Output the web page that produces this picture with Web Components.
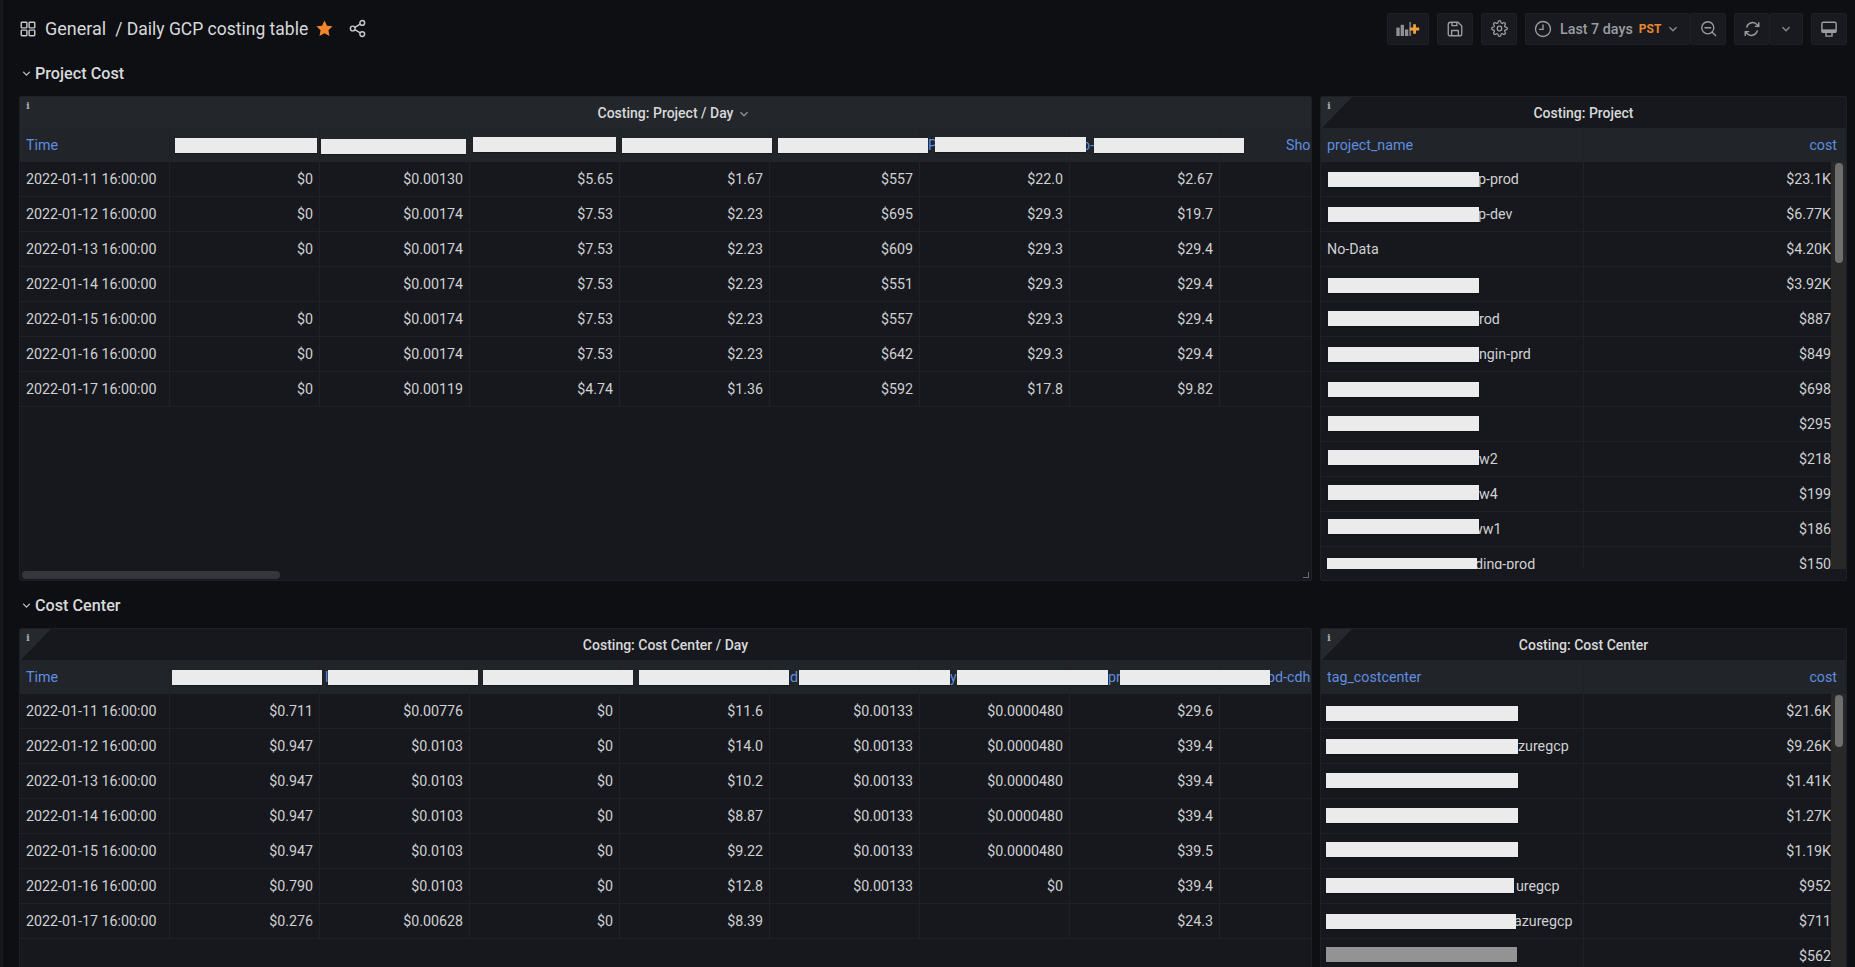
<!DOCTYPE html>
<html><head><meta charset="utf-8"><title>Daily GCP costing table</title>
<style>
html,body{margin:0;padding:0;width:1855px;height:967px;overflow:hidden;background:#0e0f13;color:#d0d1d3;font-family:Roboto,"Liberation Sans",sans-serif;font-size:14px}
</style></head><body>
<gf-dashboard>
  <gf-topbar>
    <span slot="crumb-a">General</span>
    <span slot="crumb-b">/ Daily GCP costing table</span>
  </gf-topbar>
  <gf-section label="Project Cost"></gf-section>
  <gf-panel-row>
    <gf-panel heading="Costing: Project / Day" active><cost-table key="projectDay"></cost-table></gf-panel>
    <gf-panel heading="Costing: Project" ribbon><cost-table key="project"></cost-table></gf-panel>
  </gf-panel-row>
  <gf-section label="Cost Center" second></gf-section>
  <gf-panel-row>
    <gf-panel heading="Costing: Cost Center / Day" ribbon><cost-table key="centerDay"></cost-table></gf-panel>
    <gf-panel heading="Costing: Cost Center" ribbon><cost-table key="center"></cost-table></gf-panel>
  </gf-panel-row>
</gf-dashboard>
<script>
const ICONS={
 grid:'<g fill="none" stroke="currentColor" stroke-width="1.9"><rect x="3" y="3" width="7.5" height="7.5" rx="1"/><rect x="13.5" y="3" width="7.5" height="7.5" rx="1"/><rect x="3" y="13.5" width="7.5" height="7.5" rx="1"/><rect x="13.5" y="13.5" width="7.5" height="7.5" rx="1"/></g>',
 star:'<path fill="#f0852c" d="M12 1.8l3.1 6.6 7.1.9-5.2 5 1.3 7.1L12 18l-6.3 3.4L7 14.3l-5.2-5 7.1-.9z"/>',
 share:'<g fill="none" stroke="currentColor" stroke-width="1.8"><circle cx="18" cy="5" r="3"/><circle cx="6" cy="12" r="3"/><circle cx="18" cy="19" r="3"/><path d="M8.6 10.5l6.8-4M8.6 13.5l6.8 4"/></g>',
 addpanel:'<g fill="#8e9094"><rect x="0" y="6" width="3.6" height="9"/><rect x="4.6" y="3" width="3.6" height="12"/><rect x="9.2" y="8" width="3.6" height="7"/><rect x="13.8" y="0" width="2" height="15" opacity=".75"/></g><path fill="#f2a33c" d="M18 2.5h3v3.5h3.5v3H21v3.5h-3V9h-3.5V6H18z"/>',
 save:'<path fill="none" stroke="currentColor" stroke-width="1.8" stroke-linejoin="round" d="M6 3h10l5 5v11a2 2 0 0 1-2 2H5a2 2 0 0 1-2-2V6a3 3 0 0 1 3-3zM7.5 21v-7h9v7M8 3v4.5h6.5V3"/>',
 cog:'<g fill="none" stroke="currentColor" stroke-width="1.8" stroke-linejoin="round"><circle cx="12" cy="12" r="3.2"/><path d="M19.4 15a1.65 1.65 0 0 0 .33 1.82l.06.06a2 2 0 0 1 0 2.83 2 2 0 0 1-2.83 0l-.06-.06a1.65 1.65 0 0 0-1.82-.33 1.65 1.65 0 0 0-1 1.51V21a2 2 0 0 1-2 2 2 2 0 0 1-2-2v-.09A1.65 1.65 0 0 0 9 19.4a1.65 1.65 0 0 0-1.82.33l-.06.06a2 2 0 0 1-2.83 0 2 2 0 0 1 0-2.83l.06-.06a1.65 1.65 0 0 0 .33-1.82 1.65 1.65 0 0 0-1.51-1H3a2 2 0 0 1-2-2 2 2 0 0 1 2-2h.09A1.65 1.65 0 0 0 4.6 9a1.65 1.65 0 0 0-.33-1.82l-.06-.06a2 2 0 0 1 0-2.83 2 2 0 0 1 2.83 0l.06.06a1.65 1.65 0 0 0 1.82.33H9a1.65 1.65 0 0 0 1-1.51V3a2 2 0 0 1 2-2 2 2 0 0 1 2 2v.09a1.65 1.65 0 0 0 1 1.51 1.65 1.65 0 0 0 1.82-.33l.06-.06a2 2 0 0 1 2.83 0 2 2 0 0 1 0 2.83l-.06.06a1.65 1.65 0 0 0-.33 1.82V9a1.65 1.65 0 0 0 1.51 1H21a2 2 0 0 1 2 2 2 2 0 0 1-2 2h-.09a1.65 1.65 0 0 0-1.51 1z"/></g>',
 clock:'<g fill="none" stroke="currentColor" stroke-width="1.8" stroke-linecap="round"><circle cx="12" cy="12" r="10"/><path d="M12 6.5V12.5H7.5"/></g>',
 zoomout:'<g fill="none" stroke="currentColor" stroke-width="1.9" stroke-linecap="round"><circle cx="11" cy="11" r="8.5"/><path d="M7 11h8M17.2 17.2L22 22"/></g>',
 sync:'<g fill="none" stroke="currentColor" stroke-width="1.9" stroke-linecap="round" stroke-linejoin="round"><path d="M5 9.5A8 8 0 0 1 19 6.5L21 8.5M21 3.5v5h-4.5"/><path d="M19 14.5A8 8 0 0 1 5 17.5L3 15.5M3 20.5v-5h4.5"/></g>',
 monitor:'<g fill="none" stroke="currentColor" stroke-width="1.9" stroke-linejoin="round"><rect x="2.5" y="3" width="19" height="13.5" rx="2"/><path d="M8 21.5h8v-5H8z"/></g><rect x="2.5" y="12.5" width="19" height="4" fill="currentColor"/>',
 chev:'<path fill="none" stroke="currentColor" stroke-width="2.4" stroke-linecap="round" stroke-linejoin="round" d="M6.5 9.5l5.5 5.5 5.5-5.5"/>'
};
class GfIcon extends HTMLElement{connectedCallback(){
  const n=this.getAttribute('name'),w=this.getAttribute('w')||16,h=this.getAttribute('h')||w;
  const vb=n==='addpanel'?'0 0 25 15':'0 0 24 24';
  this.attachShadow({mode:'open'}).innerHTML=`<style>:host{display:inline-flex;flex:none;width:${w}px;height:${h}px}svg{display:block;width:100%;height:100%}</style><svg viewBox="${vb}">${ICONS[n]}</svg>`;
}}
customElements.define('gf-icon',GfIcon);

class GfDashboard extends HTMLElement{constructor(){super();
  this.attachShadow({mode:'open'}).innerHTML=`<style>:host{display:block;box-sizing:border-box;width:1855px;height:967px;overflow:hidden;border-left:3px solid #16181d;padding:0 8px 0 16px}</style><slot></slot>`;
}}
customElements.define('gf-dashboard',GfDashboard);

class GfBtn extends HTMLElement{constructor(){super();
  this.attachShadow({mode:'open'}).innerHTML=`<style>:host{display:inline-flex;align-items:center;justify-content:center;box-sizing:border-box;height:32px;background:#181a1f;border:1px solid #1e2025;border-radius:2px;color:#9b9da1;font-weight:500;font-size:14px;flex:none}</style><slot></slot>`;
}}
customElements.define('gf-btn',GfBtn);

class GfTopbar extends HTMLElement{constructor(){super();
  this.attachShadow({mode:'open'}).innerHTML=`<style>
  :host{display:flex;align-items:center;height:57px;margin-left:0;color:#d8d9da;font-size:18px}
  .grid{color:#c8c9cc;margin-right:8px}
  .a{margin-right:9px;color:#d8d9da}
  .b{font-size:17.5px}
  .star{margin:0 0 0 7px}
  .share{margin-left:14px;color:#c8c9cc}
  .tools{margin-left:auto;display:flex;gap:8px;align-items:center}
  .g{display:flex}
  .b36{width:36px}.b35{width:35px}.b34{width:34px}
  .time{width:165px;justify-content:flex-start;padding-left:8px;border-right:none}
  .time .lbl{margin-left:8px;font-size:14.3px}
  .time .pst{margin-left:6px;color:#e8872f;font-size:12px;font-weight:700}
  .time gf-icon.c{margin-left:5px}
  .dim{color:#85878c}
  </style>
  <gf-icon class="grid" name="grid" w="18"></gf-icon>
  <span class="a"><slot name="crumb-a"></slot></span>
  <span class="b"><slot name="crumb-b"></slot></span>
  <gf-icon class="star" name="star" w="19"></gf-icon>
  <gf-icon class="share" name="share" w="19"></gf-icon>
  <div class="tools">
    <gf-btn style="width:42px"><gf-icon name="addpanel" w="24" h="14"></gf-icon></gf-btn>
    <gf-btn class="b36"><gf-icon name="save" w="18"></gf-icon></gf-btn>
    <gf-btn class="b36"><gf-icon name="cog" w="17"></gf-icon></gf-btn>
    <div class="g">
      <gf-btn class="time"><gf-icon name="clock" w="18"></gf-icon><span class="lbl">Last 7 days</span><span class="pst">PST</span><gf-icon class="c dim" name="chev" w="14"></gf-icon></gf-btn>
      <gf-btn class="b36"><gf-icon name="zoomout" w="17"></gf-icon></gf-btn>
    </div>
    <div class="g">
      <gf-btn class="b35" style="border-right:none"><gf-icon name="sync" w="18"></gf-icon></gf-btn>
      <gf-btn class="b34"><gf-icon class="dim" name="chev" w="14"></gf-icon></gf-btn>
    </div>
    <gf-btn class="b36"><gf-icon name="monitor" w="18"></gf-icon></gf-btn>
  </div>`;
}}
customElements.define('gf-topbar',GfTopbar);

class GfSection extends HTMLElement{connectedCallback(){
  const s=this.hasAttribute('second');
  this.attachShadow({mode:'open'}).innerHTML=`<style>
  :host{display:flex;align-items:center;height:${s?33:32}px;margin:${s?8:0}px 0 ${s?6:7}px;padding-left:1px;color:#d8d9da;font-size:16.2px;font-weight:500}
  gf-icon{margin-right:2px;color:#c0c1c4}
  </style><gf-icon name="chev" w="13"></gf-icon><span>${this.getAttribute('label')}</span>`;
}}
customElements.define('gf-section',GfSection);

class GfPanelRow extends HTMLElement{constructor(){super();
  this.attachShadow({mode:'open'}).innerHTML=`<style>:host{display:grid;grid-template-columns:1293px 527px;gap:8px;height:485px}</style><slot></slot>`;
}}
customElements.define('gf-panel-row',GfPanelRow);

class GfPanel extends HTMLElement{connectedCallback(){
  const act=this.hasAttribute('active'),rib=this.hasAttribute('ribbon');
  this.attachShadow({mode:'open'}).innerHTML=`<style>
  :host{display:flex;flex-direction:column;position:relative;box-sizing:border-box;background:#16181d;border:1px solid #1e2025;border-radius:2px;overflow:hidden;min-width:0}
  .title{height:31px;flex:none;display:flex;align-items:center;justify-content:center;font-weight:500;font-size:14px;color:#d8d9da;background:${act?'#23262b':'transparent'}}
  .title span{position:relative}
  .title gf-icon{position:absolute;left:100%;top:2px;margin-left:4px;color:#8a8c90}
  .rib{position:absolute;left:0;top:0;width:31px;height:32px;background:#25282d;clip-path:polygon(0 0,100% 0,0 100%)}
  .i{position:absolute;left:6px;top:3px;font:bold 10px "DejaVu Serif",serif;color:#a8aaae}
  .resize{position:absolute;right:2px;bottom:2px;width:6px;height:6px;border-right:1px solid #6a6c70;border-bottom:1px solid #6a6c70;box-sizing:border-box}
  .body{flex:1;min-height:0;position:relative}
  </style>
  ${rib?'<div class="rib"></div>':''}<div class="i">i</div>
  <div class="title"><span>${this.getAttribute('heading')}${act?'<gf-icon name="chev" w="14"></gf-icon>':''}</span></div>
  <div class="body"><slot></slot></div>${act?'<div class="resize"></div>':''}`;
}}
customElements.define('gf-panel',GfPanel);

class RedactBar extends HTMLElement{connectedCallback(){
  const a=k=>this.getAttribute(k);
  this.attachShadow({mode:'open'}).innerHTML=`<style>:host{position:absolute;left:${a('x')}px;top:${a('y')}px;width:${a('w')}px;height:15px;background:${a('c')||'#ebebeb'};box-shadow:0 1px 1px rgba(0,0,0,.25)}</style>`;
}}
customElements.define('redact-bar',RedactBar);

const dayRow=(t,...v)=>[t,...v,''];
const DATA={
 projectDay:{ox:20,oy:128,
  cols:'repeat(9,150px)',
  head:['Time','','','','','',[8,'P'],[12,'o-'],[66,'Sho']],
  rows:[
   dayRow('2022-01-11 16:00:00','$0','$0.00130','$5.65','$1.67','$557','$22.0','$2.67'),
   dayRow('2022-01-12 16:00:00','$0','$0.00174','$7.53','$2.23','$695','$29.3','$19.7'),
   dayRow('2022-01-13 16:00:00','$0','$0.00174','$7.53','$2.23','$609','$29.3','$29.4'),
   dayRow('2022-01-14 16:00:00','','$0.00174','$7.53','$2.23','$551','$29.3','$29.4'),
   dayRow('2022-01-15 16:00:00','$0','$0.00174','$7.53','$2.23','$557','$29.3','$29.4'),
   dayRow('2022-01-16 16:00:00','$0','$0.00174','$7.53','$2.23','$642','$29.3','$29.4'),
   dayRow('2022-01-17 16:00:00','$0','$0.00119','$4.74','$1.36','$592','$17.8','$9.82')],
  bars:[[175,138,142],[321,139,145],[473,137,143],[622,138,150],[778,138,150],[935,137,151],[1094,138,150]],
  hscroll:true},
 centerDay:{ox:20,oy:660,
  cols:'repeat(9,150px)',
  head:['Time','',[5,'l'],'','',[20,'d'],[30,'y'],[38,'pr'],[47,'pd-cdh']],
  rows:[
   dayRow('2022-01-11 16:00:00','$0.711','$0.00776','$0','$11.6','$0.00133','$0.0000480','$29.6'),
   dayRow('2022-01-12 16:00:00','$0.947','$0.0103','$0','$14.0','$0.00133','$0.0000480','$39.4'),
   dayRow('2022-01-13 16:00:00','$0.947','$0.0103','$0','$10.2','$0.00133','$0.0000480','$39.4'),
   dayRow('2022-01-14 16:00:00','$0.947','$0.0103','$0','$8.87','$0.00133','$0.0000480','$39.4'),
   dayRow('2022-01-15 16:00:00','$0.947','$0.0103','$0','$9.22','$0.00133','$0.0000480','$39.5'),
   dayRow('2022-01-16 16:00:00','$0.790','$0.0103','$0','$12.8','$0.00133','$0','$39.4'),
   dayRow('2022-01-17 16:00:00','$0.276','$0.00628','$0','$8.39','','','$24.3')],
  bars:[[172,670,150],[328,670,150],[483,670,150],[639,670,150],[799,670,151],[957,670,151],[1120,670,150]]},
 project:{ox:1321,oy:128,cols:'263px 262px',head:['project_name','cost'],rightPad:14,clip:441,
  track:{top:34,thumb:[35,100]},
  rows:[[[157,'p-prod'],'$23.1K'],[[157,'p-dev'],'$6.77K'],['No-Data','$4.20K'],['','$3.92K'],[[158,'rod'],'$887'],[[158,'ngin-prd'],'$849'],['','$698'],['','$295'],[[158,'w2'],'$218'],[[158,'w4'],'$199'],[[151,'ww1'],'$186'],[[154,'ding-prod'],'$150']],
  bars:[[1328,172,151],[1328,207,151],[1328,278,151],[1328,311,151],[1328,347,151],[1328,382,151],[1328,416,151],[1328,450,151],[1328,485,151],[1328,519,151],[1327,558,150]]},
 center:{ox:1321,oy:660,cols:'263px 262px',head:['tag_costcenter','cost'],rightPad:14,clip:441,
  track:{top:34,thumb:[35,52]},
  rows:[['','$21.6K'],[[197,'zuregcp'],'$9.26K'],['','$1.41K'],['','$1.27K'],['','$1.19K'],[[195,'uregcp'],'$952'],[[193,'azuregcp'],'$711'],['','$562']],
  bars:[[1326,706,192],[1326,739,192],[1326,773,192],[1326,808,192],[1326,842,192],[1326,878,188],[1326,914,190],[1326,947,191,'#939393']]}
};
class CostTable extends HTMLElement{connectedCallback(){
  const d=DATA[this.getAttribute('key')];
  const cell=(c,cls)=>{const pad=Array.isArray(c)?c[0]:null,t=Array.isArray(c)?c[1]:c;
    return `<div class="${cls}"${pad!==null?` style="padding-left:${pad}px"`:''}>${t}</div>`;};
  const n=d.head.length;
  let h='';
  d.head.forEach((c,i)=>{const right=n===2&&i===1;h+=cell(c,'th'+(right?' r':''));});
  d.rows.forEach(r=>r.forEach((c,i)=>{h+=cell(c,'td'+(i>0?' r':''));}));
  const bars=d.bars.map(b=>`<redact-bar x="${b[0]-d.ox}" y="${b[1]-d.oy}" w="${b[2]}"${b[3]?` c="${b[3]}"`:''}></redact-bar>`).join('');
  const track=d.track?`<div class="track" style="top:${d.track.top}px"><div class="thumb" style="margin-top:${d.track.thumb[0]-34}px;height:${d.track.thumb[1]}px"></div></div>`:'';
  const hs=d.hscroll?'<div class="hs"></div>':'';
  this.attachShadow({mode:'open'}).innerHTML=`<style>
  :host{display:block;position:absolute;left:0;right:0;top:0;height:${d.clip||453}px;overflow:hidden;font-size:14.25px}
  .grid{display:grid;grid-template-columns:${d.cols};grid-auto-rows:35px;grid-template-rows:34px;width:max-content}
  .th,.td{box-sizing:border-box;padding:0 6px;display:flex;align-items:center;white-space:nowrap;border-right:1px solid #1f2126;min-width:0}
  .th{background:#212429;color:#5f8ee0}
  .th.r{justify-content:flex-end;padding-right:8px}
  .td{border-bottom:1px solid #1f2126;color:#d0d1d3}
  .td.r{justify-content:flex-end;${d.rightPad?`padding-right:${d.rightPad}px;`:''}}
  .track{position:absolute;right:0;bottom:0;width:15px;background:#282828}
  .thumb{width:8px;margin-left:4px;border-radius:4px;background:#6e6e6e}
  .hs{position:absolute;left:2px;top:443px;width:258px;height:8px;border-radius:4px;background:#34363c}
  </style><div class="grid">${h}</div>${bars}${track}${hs}`;
}}
customElements.define('cost-table',CostTable);
</script>
</body></html>
